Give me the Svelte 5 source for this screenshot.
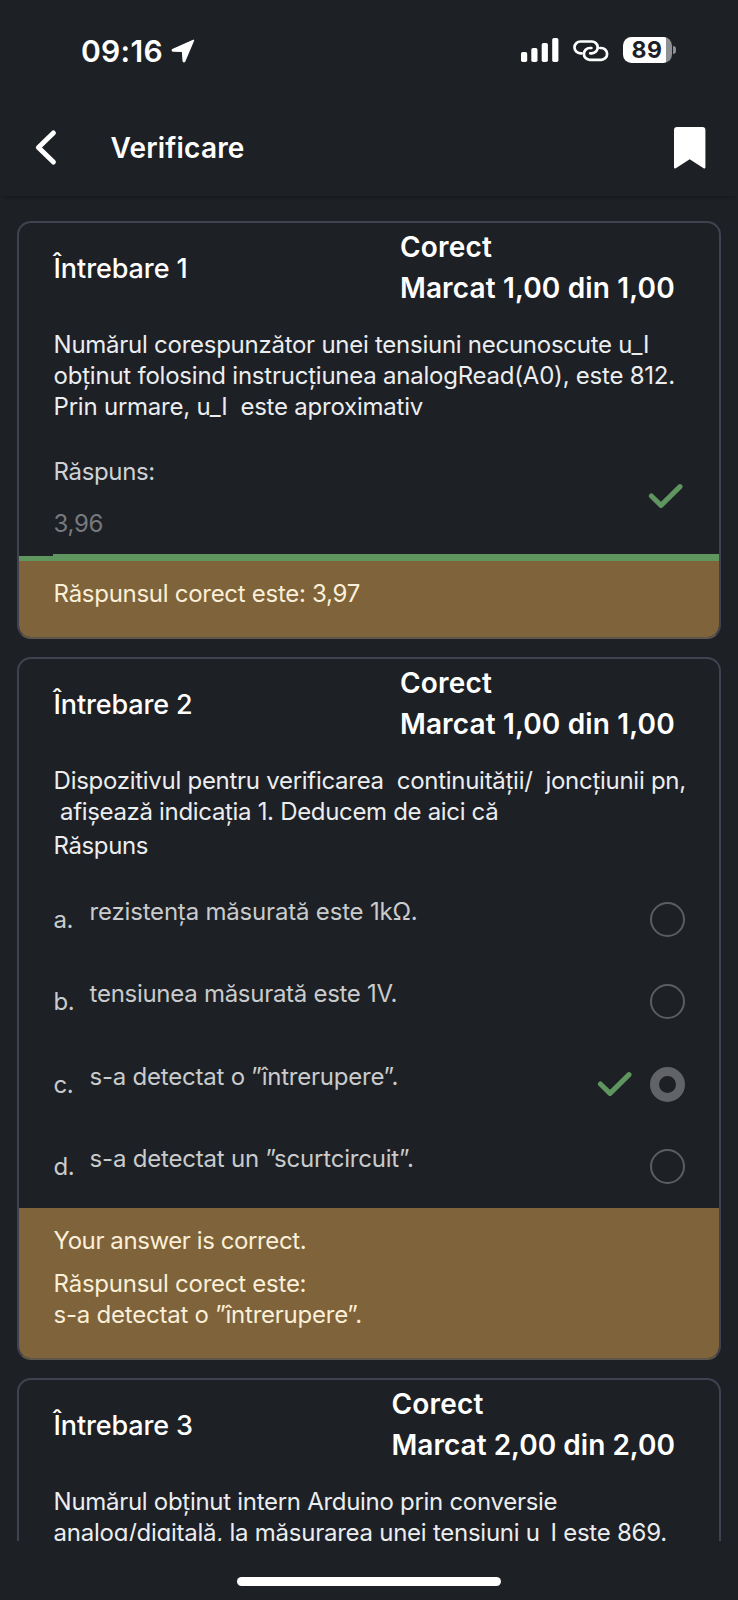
<script>
  const questions = [
    {
      title: 'Întrebare 1',
      titleSpacing: -0.085,
      status: 'Corect',
      mark: 'Marcat 1,00 din 1,00',
      markSpacing: 0.15,
      marksWidth: 275.6,
      lines: [
        { text: 'Numărul corespunzător unei tensiuni necunoscute u_I', ls: -0.262 },
        { text: 'obținut folosind instrucțiunea analogRead(A0), este 812.', ls: -0.228 },
        { text: 'Prin urmare, u_I  este aproximativ', ls: -0.23 }
      ],
      answer: '3,96',
      feedback: [[{ text: 'Răspunsul corect este: 3,97', ls: -0.28 }]]
    },
    {
      title: 'Întrebare 2',
      titleSpacing: -0.15,
      status: 'Corect',
      mark: 'Marcat 1,00 din 1,00',
      markSpacing: 0.15,
      marksWidth: 275.6,
      lines: [
        { text: 'Dispozitivul pentru verificarea  continuității/  joncțiunii pn,', ls: -0.28 },
        { text: ' afișează indicația 1. Deducem de aici că', ls: -0.325 }
      ],
      options: [
        { key: 'a.', text: 'rezistența măsurată este 1kΩ.', ls: -0.19 },
        { key: 'b.', text: 'tensiunea măsurată este 1V.', ls: -0.28 },
        { key: 'c.', text: 's-a detectat o ”întrerupere”.', ls: -0.226, selected: true },
        { key: 'd.', text: 's-a detectat un ”scurtcircuit”.', ls: -0.2 }
      ],
      feedback: [
        [{ text: 'Your answer is correct.', ls: -0.41 }],
        [
          { text: 'Răspunsul corect este:', ls: -0.25 },
          { text: 's-a detectat o ”întrerupere”.', ls: -0.236 }
        ]
      ]
    },
    {
      title: 'Întrebare 3',
      titleSpacing: -0.15,
      status: 'Corect',
      mark: 'Marcat 2,00 din 2,00',
      markSpacing: 0.02,
      marksWidth: 284,
      lines: [
        { text: 'Numărul obținut intern Arduino prin conversie', ls: -0.29 },
        { text: 'analog/digitală, la măsurarea unei tensiuni u_I este 869.', ls: -0.25 }
      ]
    }
  ];
</script>

{#snippet check()}
  <svg class="check" width="36" height="28" viewBox="0 0 36 28">
    <path d="M3.4 14 L13 23.4 L32 4.6" />
  </svg>
{/snippet}

{#snippet textLine(line)}
  <div class="line" style="letter-spacing: {line.ls}px">{line.text}</div>
{/snippet}

<div class="screen">
  <div class="status-bar">
    <span class="time">09:16</span>
    <svg class="location" width="26" height="26" viewBox="0 0 26 26">
      <path d="M23.4 2.4 L2.6 11.8 Q2 12.6 3 12.9 L12.6 13.3 L13.3 23 Q13.8 24.2 14.6 23.2 Z" />
    </svg>
    <svg class="signal" width="38" height="24" viewBox="0 0 38 24">
      <rect x="0" y="14" width="6.2" height="10" rx="1.8" />
      <rect x="10.3" y="10" width="6.2" height="14" rx="1.8" />
      <rect x="20.7" y="5" width="6.2" height="19" rx="1.8" />
      <rect x="31.2" y="0" width="6.2" height="24" rx="1.8" />
    </svg>
    <svg class="link" width="36" height="22" viewBox="0 0 36 22">
      <path d="M8.6 13.3 H7.4 A5.9 5.9 0 0 1 7.4 1.5 H18.8 A5.9 5.9 0 0 1 18.8 13.3 H17.2" />
      <path d="M27.2 8 H28.2 A5.9 5.9 0 0 1 28.2 19.8 H16.8 A5.9 5.9 0 0 1 16.8 8 H18.4" />
    </svg>
    <div class="battery"><span>89</span></div>
    <i class="nub"></i>
  </div>

  <header>
    <svg class="back" width="26" height="40" viewBox="0 0 26 40">
      <path d="M19.4 5 L4.4 19.5 L19.4 34" />
    </svg>
    <h1>Verificare</h1>
    <svg class="bookmark" width="32" height="42" viewBox="0 0 32 42">
      <path d="M3 0 H28.4 Q31.4 0 31.4 3 V40.4 Q31 42 29.6 41.2 L15.7 32.2 L1.8 41.2 Q.4 42 0 40.4 V3 Q0 0 3 0 Z" />
    </svg>
  </header>

  <main>
    {#each questions as q}
      <section>
        <div class="head">
          <h2 style="letter-spacing: {q.titleSpacing}px">{q.title}</h2>
          <div class="marks" style="width: {q.marksWidth}px">
            <div class="state">{q.status}</div>
            <div style="letter-spacing: {q.markSpacing}px">{q.mark}</div>
          </div>
        </div>
        <div class="body">
          {#each q.lines as line}{@render textLine(line)}{/each}
          {#if q.options}
            <div class="prompt">Răspuns</div>
          {/if}
        </div>
        {#if q.answer}
          <div class="field">
            <div class="field-text">
              <div class="label">Răspuns:</div>
              <div class="value">{q.answer}</div>
            </div>
            {@render check()}
          </div>
          <div class="underline"></div>
          <div class="border-green"></div>
        {/if}
        {#if q.options}
          <div class="options">
            {#each q.options as o}
              <div class="option">
                <span class="key">{o.key}</span>
                <span class="option-text" style="letter-spacing: {o.ls}px">{o.text}</span>
                {#if o.selected}{@render check()}{/if}
                <i class="radio" class:selected={o.selected}></i>
              </div>
            {/each}
          </div>
        {/if}
        {#if q.feedback}
          <div class="feedback">
            {#each q.feedback as para}
              <div>{#each para as line}{@render textLine(line)}{/each}</div>
            {/each}
          </div>
        {/if}
      </section>
    {/each}
  </main>

  <footer><div class="home-indicator"></div></footer>
</div>

<style>
  :global(body) { background: #1d2025; }
  .screen {
    box-sizing: border-box;
    width: 738px;
    height: 1600px;
    display: flex;
    flex-direction: column;
    overflow: hidden;
    background: #1d2025;
    color: #fff;
    font-family: Inter, sans-serif;
  }
  svg { display: block; flex: none; fill: #fff; }
  h1, h2 { margin: 0; }

  .status-bar {
    flex: none;
    height: 100px;
    padding: 0 62px 0 81px;
    box-sizing: border-box;
    display: flex;
    align-items: center;
  }
  .time {
    font-size: 30px;
    line-height: 40px;
    font-weight: 600;
    letter-spacing: 0.3px;
    padding-top: 1px;
  }
  .location { margin: 1px auto 0 7px; stroke: #fff; stroke-width: 1.6; stroke-linejoin: round; }
  .link { fill: none; stroke: #fff; stroke-width: 2.7; stroke-linecap: round; margin: 1px 14px 0 14px; }
  .battery {
    width: 49px;
    height: 26px;
    border-radius: 8.5px;
    background: linear-gradient(90deg, #fff 43.5px, #8e8f92 43.5px);
    color: #1d2025;
    font-size: 23px;
    line-height: 26px;
    font-weight: 700;
    letter-spacing: 0.5px;
  }
  .battery span { padding-left: 9px; }
  .nub { width: 3px; height: 8px; margin-left: 1.5px; border-radius: 0 4px 4px 0; background: #8e8f92; }

  header {
    flex: none;
    height: 96px;
    box-sizing: border-box;
    padding: 0 32px 0 34px;
    display: flex;
    align-items: center;
    box-shadow: 0 4px 3px -3px rgba(0, 0, 0, 0.3);
  }
  .back { fill: none; stroke: #fff; stroke-width: 5; stroke-linecap: round; stroke-linejoin: round; }
  h1 {
    margin-left: 50.5px;
    font-size: 28px;
    line-height: 40px;
    font-weight: 600;
    letter-spacing: 0.2px;
  }
  .bookmark { margin-left: auto; }

  main {
    flex: none;
    box-sizing: border-box;
    height: 1345px;
    padding: 25px 17px 0;
    overflow: hidden;
    display: flex;
    flex-direction: column;
    gap: 18px;
  }
  section {
    flex: none;
    border: 2px solid #404250;
    border-radius: 14px;
    overflow: hidden;
  }
  section:last-child { padding-bottom: 40px; }
  section:has(.feedback) { border-bottom-color: #5c564b; }
  .head {
    display: flex;
    align-items: center;
    justify-content: space-between;
    padding: 4px 43.5px 2px 34.6px;
    font-size: 28px;
    line-height: 41px;
    font-weight: 600;
  }
  h2 { font-size: 27px; font-weight: 500; }
  .state { letter-spacing: 0.19px; }
  .marks { white-space: nowrap; }

  .body {
    margin-top: 18px;
    padding-left: 34.6px;
    font-size: 24px;
    line-height: 31px;
    color: #ebedef;
  }
  .line { white-space: pre; }
  .prompt { margin-top: 3px; letter-spacing: -0.4px; }

  .field {
    display: flex;
    align-items: center;
    justify-content: space-between;
    padding: 32px 35px 0 34.6px;
    height: 100px;
    font-size: 24px;
    line-height: 31px;
  }
  .field-text { display: flex; flex-direction: column; gap: 21px; padding-top: 2px; align-self: flex-start; }
  .label { color: #cfd2d5; letter-spacing: -0.35px; }
  .value { color: #77797d; letter-spacing: -0.3px; }
  .field .check { margin-bottom: 16px; }
  .underline { height: 2px; margin-left: 34px; background: #5f965f; }
  .border-green { height: 5px; background: #5f965f; }

  .options { margin-top: 17px; font-size: 24px; line-height: 31px; color: #c9cbcc; }
  .option { display: flex; align-items: center; height: 82.5px; padding: 0 34px 0 34.6px; }
  .key { width: 36px; flex: none; letter-spacing: -0.5px; }
  .option-text { margin-right: auto; padding-bottom: 16px; white-space: pre; }
  .radio {
    box-sizing: border-box;
    width: 35px;
    height: 35px;
    border: 2px solid #5b5d61;
    border-radius: 50%;
  }
  .radio.selected { border: 9px solid #616367; }
  .option .check { margin-right: 17px; }
  .check { fill: none; stroke: #5f965f; stroke-width: 5; stroke-linecap: round; stroke-linejoin: round; }

  .feedback {
    display: flex;
    flex-direction: column;
    gap: 12px;
    padding: 16.5px 34px 28.5px 34.6px;
    background: #7e633b;
    color: #fbefd8;
    font-size: 24px;
    line-height: 31px;
  }

  footer { flex: 1; display: flex; justify-content: center; align-items: flex-start; padding-top: 36px; }
  .home-indicator { width: 264px; height: 9px; border-radius: 5px; background: #fff; }
</style>
